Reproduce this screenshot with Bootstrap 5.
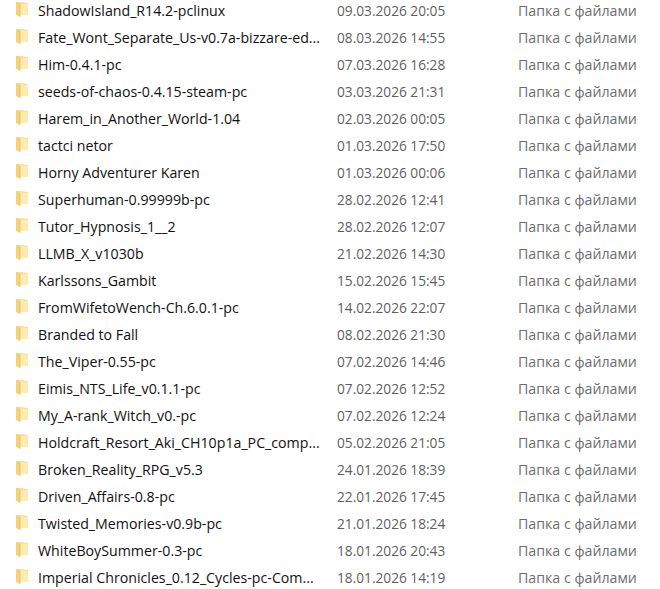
<!DOCTYPE html>
<html lang="ru">
<head>
<meta charset="UTF-8">
<title>Папка</title>
<link href="https://cdn.jsdelivr.net/npm/bootstrap@5.3.3/dist/css/bootstrap.min.css" rel="stylesheet">
<script src="https://cdn.jsdelivr.net/npm/bootstrap@5.3.3/dist/js/bootstrap.bundle.min.js"></script>
<style>
body { background: #fff; font-family: "Open Sans", "Noto Sans", sans-serif; font-size: 14.2px; overflow: hidden; }
.file-list { margin-top: -3px; }
.file-row { height: 27px; line-height: 21px; padding-left: 16px; }
.folder-ico { width: 13px; height: 17px; flex: none; margin-right: 9px; margin-top: -2px; }
.file-name { width: 299px; flex: none; color: #111; white-space: nowrap; }
.file-date { width: 181px; flex: none; color: #5f5f5f; font-size: 13.7px; }
.file-type { color: #6d6d6d; }
</style>
</head>
<body>
<div class="file-list" id="list"></div>
<script>
const rows = [
  ["ShadowIsland_R14.2-pclinux", "09.03.2026 20:05"],
  ["Fate_Wont_Separate_Us-v0.7a-bizzare-ed...", "08.03.2026 14:55"],
  ["Him-0.4.1-pc", "07.03.2026 16:28"],
  ["seeds-of-chaos-0.4.15-steam-pc", "03.03.2026 21:31"],
  ["Harem_in_Another_World-1.04", "02.03.2026 00:05"],
  ["tactci netor", "01.03.2026 17:50"],
  ["Horny Adventurer Karen", "01.03.2026 00:06"],
  ["Superhuman-0.99999b-pc", "28.02.2026 12:41"],
  ["Tutor_Hypnosis_1__2", "28.02.2026 12:07"],
  ["LLMB_X_v1030b", "21.02.2026 14:30"],
  ["Karlssons_Gambit", "15.02.2026 15:45"],
  ["FromWifetoWench-Ch.6.0.1-pc", "14.02.2026 22:07"],
  ["Branded to Fall", "08.02.2026 21:30"],
  ["The_Viper-0.55-pc", "07.02.2026 14:46"],
  ["Eimis_NTS_Life_v0.1.1-pc", "07.02.2026 12:52"],
  ["My_A-rank_Witch_v0.-pc", "07.02.2026 12:24"],
  ["Holdcraft_Resort_Aki_CH10p1a_PC_comp...", "05.02.2026 21:05"],
  ["Broken_Reality_RPG_v5.3", "24.01.2026 18:39"],
  ["Driven_Affairs-0.8-pc", "22.01.2026 17:45"],
  ["Twisted_Memories-v0.9b-pc", "21.01.2026 18:24"],
  ["WhiteBoySummer-0.3-pc", "18.01.2026 20:43"],
  ["Imperial Chronicles_0.12_Cycles-pc-Com...", "18.01.2026 14:19"]
];
// folder: pale back panel, darker spine on the left, light front flap
const ico = '<svg class="folder-ico" viewBox="0 0 13 17"><path d="M0 1h5l7 1v12H0z" fill="#f8e09a"/><path d="M0 1h2l2 2v13l-4-2z" fill="#f4d277"/><path d="M4 3h8v11H4z" fill="#fdebb0"/><path d="M4 3v13" stroke="#e2bb5c" stroke-width=".7"/></svg>';
document.getElementById('list').innerHTML = rows.map(r =>
  `<div class="file-row d-flex align-items-center">${ico}<span class="file-name">${r[0]}</span><span class="file-date">${r[1]}</span><span class="file-type">Папка с файлами</span></div>`
).join('');
</script>
</body>
</html>
